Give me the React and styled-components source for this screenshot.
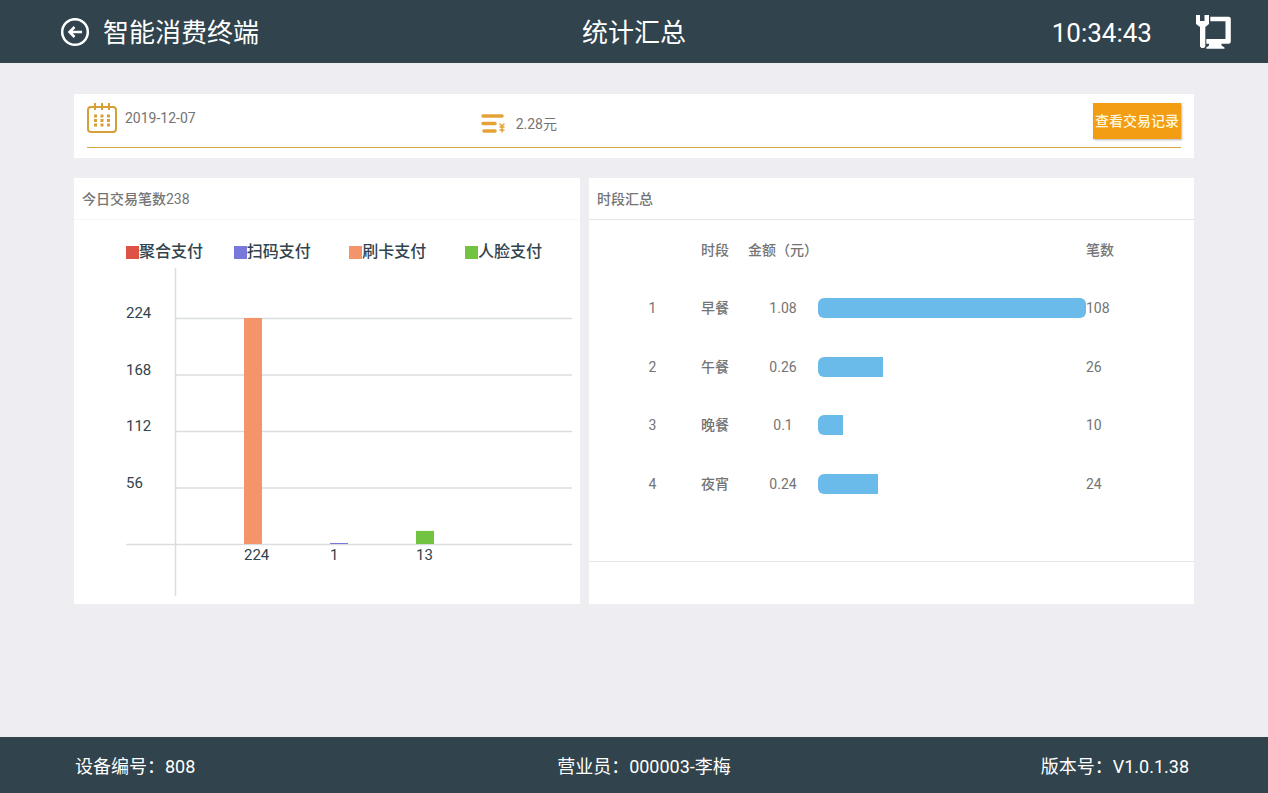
import React, { useState } from 'react';
import styled, { createGlobalStyle } from 'styled-components';

const GlobalStyle = createGlobalStyle`
    * {
        box-sizing: border-box;
    }

    body {
        background-color: #eeeef2;
        color: #747474;
        font-family: Roboto, "Noto Sans CJK SC", sans-serif;
        font-size: 14px;
        line-height: 20px;
        margin: 0;
    }
`;

const Page = styled.div`
    display: flex;
    flex-direction: column;
    min-height: 100vh;
`;

const Header = styled.header`
    align-items: center;
    background-color: #31434c;
    color: #fff;
    display: grid;
    font-size: 26px;
    grid-template-columns: 1fr auto 1fr;
    line-height: 32px;
    padding: 15px 36px 12px;
`;

const BackButton = styled.button`
    align-items: center;
    background: none;
    border: 0;
    color: inherit;
    cursor: pointer;
    display: flex;
    font: inherit;
    gap: 13px;
    justify-self: start;
    padding: 0 0 0 24px;
`;

const PageTitle = styled.h1`
    font-size: inherit;
    font-weight: normal;
    margin: 0;
`;

const HeaderStatus = styled.div`
    align-items: center;
    display: flex;
    gap: 44px;
    justify-self: end;
`;

const IconButton = styled.button`
    background: none;
    border: 0;
    color: inherit;
    cursor: pointer;
    display: flex;
    padding: 0;
`;

const Main = styled.main`
    display: flex;
    flex: 1;
    flex-direction: column;
    gap: 20px;
    padding: 31px 74px;
`;

const SummaryCard = styled.section`
    background-color: #fff;
    padding: 9px 13px 10px;
`;

const SummaryRow = styled.div`
    align-items: start;
    border-bottom: 1px solid #d2a53f;
    display: grid;
    grid-template-columns: 36fr 56fr auto;
    height: 45px;
`;

const SummaryItem = styled.div`
    align-items: center;
    display: flex;
    gap: 8px;
    padding-top: ${props => props.$low ? '10px' : '0'};
`;

const RecordsButton = styled.button`
    background-color: #f29d13;
    border: 0;
    box-shadow: 1px 1px 2px rgba(0, 0, 0, 0.3);
    color: #fff8df;
    cursor: pointer;
    font: inherit;
    font-weight: 500;
    height: 36px;
    padding: 0 2px;
`;

const Panels = styled.div`
    display: grid;
    gap: 9px;
    grid-template-columns: 506fr 605fr;
`;

const Panel = styled.section`
    background-color: #fff;
    display: flex;
    flex-direction: column;
    min-width: 0;
`;

const PanelHeader = styled.h2`
    border-bottom: 1px solid ${props => props.$line};
    font-size: 14px;
    font-weight: ${props => props.$strong ? 500 : 400};
    line-height: 20px;
    margin: 0;
    padding: 11px 8px 10px;
`;

const Strong = styled.span`
    font-weight: 500;
`;

const PanelFooter = styled.div`
    border-top: 1px solid #e6e6e6;
    height: 43px;
    margin-top: auto;
`;

const Legend = styled.ul`
    color: #31434c;
    display: grid;
    font-size: 16px;
    font-weight: 500;
    grid-template-columns: 108fr 116fr 116fr 77fr;
    line-height: 20px;
    list-style: none;
    margin: 0;
    padding: 22px 38px 0 52px;
`;

const LegendItem = styled.li`
    align-items: center;
    display: flex;
    white-space: nowrap;

    &::before {
        background-color: ${props => props.$color};
        content: "";
        height: 13px;
        width: 13px;
    }
`;

const Chart = styled.svg`
    display: block;
    fill: #31434c;
    font-size: 15px;
    margin: 6px 8px 8px 52px;
`;

const PeriodTable = styled.table`
    border-collapse: collapse;
    height: 293px;
    margin-bottom: 48px;
    table-layout: fixed;
    width: 100%;
`;

const HeadCell = styled.th`
    font-weight: 500;
    height: 59px;
    padding: 0;
    text-align: ${props => props.$align || 'center'};
    white-space: nowrap;
    width: ${props => props.$width || 'auto'};
`;

const Cell = styled.td`
    font-weight: ${props => props.$strong ? 500 : 400};
    height: 58px;
    padding: 0;
    text-align: ${props => props.$align || 'center'};
`;

const IndexCell = styled(Cell)`
    padding-left: 34px;
`;

const Track = styled.div`
    border-radius: 6px;
    height: 20px;
    overflow: hidden;
`;

const Fill = styled.div`
    background-color: #6abbea;
    height: 100%;
`;

const Footer = styled.footer`
    background-color: #31434c;
    color: #fff;
    display: grid;
    font-size: 18px;
    grid-template-columns: 483fr auto 459fr;
    line-height: 24px;
    padding: 18px 79px 14px 75px;
`;

const FooterText = styled.span`
    text-align: ${props => props.$align || 'left'};
`;

const BackIcon = () => (
    <svg width="30" height="30" viewBox="0 0 30 30" fill="none" stroke="currentColor" aria-hidden="true">
        <circle cx="15" cy="14" r="12.800" strokeWidth="2.500" />
        <path d="M22 14H10M14.500 9L9.500 14l5 5" strokeWidth="2.500" />
    </svg>
);

// wrench on the left, monitor with its stand on the right
const DeviceIcon = () => (
    <svg width="36" height="36" viewBox="0 0 36 36" fill="currentColor" aria-hidden="true">
        <path d="M0 0h4v6h4.500V0H13v9L9.300 12v19.500L8 33H5.500L4 31.500V12L0 9z" />
        <path d="M14.300 1.700H32.500Q34.800 1.700 34.800 4V26.500Q34.800 28.800 32.500 28.800H25.500V30.500L28.500 32.500V33.800H10.300V32.500L13 30.500V28.800H10.300V24H29.500V6.300H14.300z" />
    </svg>
);

const CalendarIcon = () => (
    <svg width="30" height="30" viewBox="0 0 30 30" fill="none" stroke="#d6a038" strokeWidth="2" aria-hidden="true">
        <rect x="1" y="4" width="28" height="25" rx="3" />
        <path d="M8 0v7M15 0v7M22 0v7" />
        <path d="M7 13h17M7 17.500h17M7 22h17" strokeWidth="3" strokeDasharray="3 3.500" />
    </svg>
);

const MoneyIcon = () => (
    <svg width="27" height="22" viewBox="1 0 27 22" fill="none" stroke="#e5a236" strokeLinecap="round" aria-hidden="true">
        <path d="M3 3h19M3 10.500h12M4 18h11" strokeWidth="3.500" />
        <path d="M20 11l2 2 2-2M20 14h4M20 17h4M22 13v6" strokeWidth="1.500" />
    </svg>
);

const payments = [
    { name: '聚合支付', color: '#de5246' },
    { name: '扫码支付', color: '#7777dc' },
    { name: '刷卡支付', color: '#f3946a' },
    { name: '人脸支付', color: '#71c341' },
];

const bars = [
    { count: 224, color: '#f3946a' },
    { count: 1, color: '#7777dc' },
    { count: 13, color: '#71c341' },
];

const ticks = [224, 168, 112, 56];

const periods = [
    { name: '早餐', amount: 1.08, count: 108 },
    { name: '午餐', amount: 0.26, count: 26 },
    { name: '晚餐', amount: 0.1, count: 10 },
    { name: '夜宵', amount: 0.24, count: 24 },
];

const BASELINE = 276;
const PLOT_HEIGHT = 226;

const PaymentChart = () => {
    const max = ticks[0];
    const toY = value => BASELINE - (value / max) * PLOT_HEIGHT;

    return (
        <Chart viewBox="0 0 446 328" role="img" aria-label="今日交易笔数">
            <g stroke="#dadddf" strokeWidth="1.500">
                <path d="M49.500 0V328M0 276.500H446" />
                {ticks.map(tick => (
                    <path key={tick} d={`M49 ${toY(tick) + 0.5}H446`} />
                ))}
            </g>
            {ticks.map(tick => (
                <text key={tick} x="0" y={toY(tick)}>{tick}</text>
            ))}
            {bars.map((bar, i) => (
                <g key={bar.color}>
                    <rect x={118 + i * 86} y={toY(bar.count)} width="18" height={BASELINE - toY(bar.count)} fill={bar.color} />
                    <text x={118 + i * 86} y="292">{bar.count}</text>
                </g>
            ))}
        </Chart>
    );
};

const App = () => {
    const [time] = useState('10:34:43');
    const total = bars.reduce((sum, bar) => sum + bar.count, 0);
    const top = Math.max(...periods.map(period => period.amount));

    return (
        <Page>
            <GlobalStyle />
            <Header>
                <BackButton type="button">
                    <BackIcon />
                    智能消费终端
                </BackButton>
                <PageTitle>统计汇总</PageTitle>
                <HeaderStatus>
                    <time>{time}</time>
                    <IconButton type="button" aria-label="设备">
                        <DeviceIcon />
                    </IconButton>
                </HeaderStatus>
            </Header>

            <Main>
                <SummaryCard>
                    <SummaryRow>
                        <SummaryItem>
                            <CalendarIcon />
                            2019-12-07
                        </SummaryItem>
                        <SummaryItem $low>
                            <MoneyIcon />
                            2.28元
                        </SummaryItem>
                        <RecordsButton type="button">查看交易记录</RecordsButton>
                    </SummaryRow>
                </SummaryCard>

                <Panels>
                    <Panel>
                        <PanelHeader $line="#f7f7f7">
                            <Strong>今日交易笔数</Strong>{total}
                        </PanelHeader>
                        <Legend>
                            {payments.map(payment => (
                                <LegendItem key={payment.name} $color={payment.color}>{payment.name}</LegendItem>
                            ))}
                        </Legend>
                        <PaymentChart />
                    </Panel>

                    <Panel>
                        <PanelHeader $line="#e6e6e6" $strong>时段汇总</PanelHeader>
                        <PeriodTable>
                            <thead>
                                <tr>
                                    <HeadCell $width="93px" />
                                    <HeadCell $width="66px">时段</HeadCell>
                                    <HeadCell $width="70px">金额（元）</HeadCell>
                                    <HeadCell />
                                    <HeadCell $width="108px" $align="left">笔数</HeadCell>
                                </tr>
                            </thead>
                            <tbody>
                                {periods.map((period, i) => (
                                    <tr key={period.name}>
                                        <IndexCell>{i + 1}</IndexCell>
                                        <Cell $strong>{period.name}</Cell>
                                        <Cell>{period.amount}</Cell>
                                        <Cell>
                                            <Track>
                                                <Fill style={{ width: `${(period.amount / top) * 100}%` }} />
                                            </Track>
                                        </Cell>
                                        <Cell $align="left">{period.count}</Cell>
                                    </tr>
                                ))}
                            </tbody>
                        </PeriodTable>
                        <PanelFooter />
                    </Panel>
                </Panels>
            </Main>

            <Footer>
                <FooterText>设备编号：808</FooterText>
                <FooterText>营业员：000003-李梅</FooterText>
                <FooterText $align="right">版本号：V1.0.1.38</FooterText>
            </Footer>
        </Page>
    );
};

export default App;
